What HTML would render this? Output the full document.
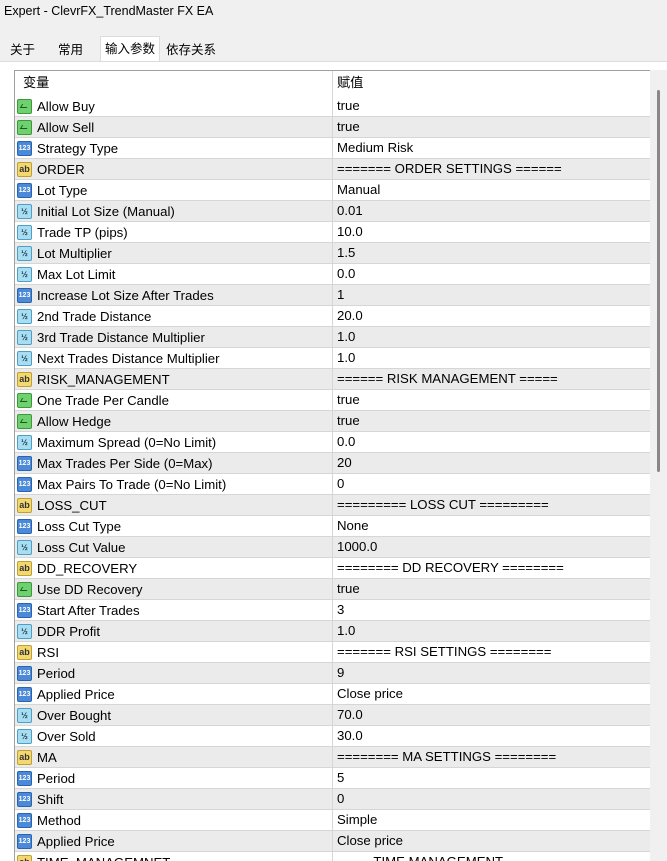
<!DOCTYPE html>
<html><head><meta charset="utf-8"><style>
html{overflow:hidden;height:861px}
body{margin:0;width:667px;height:861px;overflow:hidden;background:#f0f0f0;font-family:"Liberation Sans","Noto Sans CJK SC",sans-serif;font-size:13.2px;color:#000;position:relative}
.title{position:absolute;left:4px;top:4px;font-size:12.5px}
.tabs{position:absolute;top:36px;left:0;height:25px;width:667px}
.tab{position:absolute;top:3px;height:22px;line-height:22px;font-size:12.5px}
.tab.sel{top:0;background:#fff;height:26px;line-height:24px;padding:0 4px;border:1px solid #dcdcdc;border-bottom:none}
.panel{position:absolute;left:0;top:61px;width:667px;height:800px;background:#fff;border-top:1px solid #dcdcdc}
.tbl{position:absolute;left:14px;top:70px;width:636px;height:791px;border:1px solid #a0a0a0;border-right:none;border-bottom:none;background:#fff;overflow:hidden}
.hdr{position:absolute;left:0;top:0;width:636px;height:24px;line-height:24px}
.row{position:absolute;left:0;width:636px;height:20px;line-height:21px;border-bottom:1px solid #d6d6d6}
.row.g{background:#ebebeb}
.n{position:absolute;left:22px}
.v{position:absolute;left:317px;border-left:1px solid #d6d6d6;height:21px;top:-1px;line-height:22px;padding-left:4px;white-space:pre}
.ic{position:absolute;left:2px;top:3px;border-radius:2px;font-size:7px;text-align:center;font-weight:bold}
.b{background:#6fd06f;border:1px solid #3a9a3a;width:13px;height:13px}
.b:after{content:"";position:absolute;left:3px;top:4px;width:6px;height:3px;border-left:1.5px solid #1a5a1a;border-bottom:1.5px solid #1a5a1a;transform:skewX(-30deg)}
.i{background:#4a8ad8;color:#fff;border:1px solid #2a64b0;width:13px;height:13px;line-height:13px}
.d{background:#a8def0;color:#135;border:1px solid #4aa0c8;width:13px;height:13px;line-height:13px;font-size:8px}
.s{background:#f3d870;color:#333;border:1px solid #c0a030;width:13px;height:13px;line-height:13px;font-size:9px}
.sb{position:absolute;left:650px;top:70px;width:17px;height:791px;background:#f0f0f0}
.th{position:absolute;left:657px;top:90px;width:3px;height:382px;background:#888;border-radius:2px}
</style></head><body>
<div class="title">Expert - ClevrFX_TrendMaster FX EA</div>
<div class="tabs">
<div class="tab" style="left:10px">关于</div>
<div class="tab" style="left:58px">常用</div>
<div class="tab sel" style="left:100px">输入参数</div>
<div class="tab" style="left:166px">依存关系</div>
</div>
<div class="panel"></div>
<div class="tbl">
<div class="hdr"><span style="position:absolute;left:8px">变量</span><span style="position:absolute;left:317px;border-left:1px solid #d6d6d6;padding-left:4px;height:24px">赋值</span></div>
<div id="rows"></div>
</div>
<div class="sb"></div><div class="th"></div>
<script>
var R=[["b","Allow Buy","true"],["b","Allow Sell","true"],["i","Strategy Type","Medium Risk"],["s","ORDER","======= ORDER SETTINGS ======"],["i","Lot Type","Manual"],["d","Initial Lot Size (Manual)","0.01"],["d","Trade TP (pips)","10.0"],["d","Lot Multiplier","1.5"],["d","Max Lot Limit","0.0"],["i","Increase Lot Size After Trades","1"],["d","2nd Trade Distance","20.0"],["d","3rd Trade Distance Multiplier","1.0"],["d","Next Trades Distance Multiplier","1.0"],["s","RISK_MANAGEMENT","====== RISK MANAGEMENT ====="],["b","One Trade Per Candle","true"],["b","Allow Hedge","true"],["d","Maximum Spread (0=No Limit)","0.0"],["i","Max Trades Per Side (0=Max)","20"],["i","Max Pairs To Trade (0=No Limit)","0"],["s","LOSS_CUT","========= LOSS CUT ========="],["i","Loss Cut Type","None"],["d","Loss Cut Value","1000.0"],["s","DD_RECOVERY","======== DD RECOVERY ========"],["b","Use DD Recovery","true"],["i","Start After Trades","3"],["d","DDR Profit","1.0"],["s","RSI","======= RSI SETTINGS ========"],["i","Period","9"],["i","Applied Price","Close price"],["d","Over Bought","70.0"],["d","Over Sold","30.0"],["s","MA","======== MA SETTINGS ========"],["i","Period","5"],["i","Shift","0"],["i","Method","Simple"],["i","Applied Price","Close price"],["s","TIME_MANAGEMNET","          TIME MANAGEMENT"]];
var L={b:"",i:"123",d:"½",s:"ab"},h="";
R.forEach(function(r,k){h+='<div class="row'+(k%2?' g':'')+'" style="top:'+(25+k*21)+'px"><span class="ic '+r[0]+'">'+L[r[0]]+'</span><span class="n">'+r[1]+'</span><span class="v">'+r[2]+'</span></div>'});
document.getElementById("rows").innerHTML=h;
</script>
</body></html>
